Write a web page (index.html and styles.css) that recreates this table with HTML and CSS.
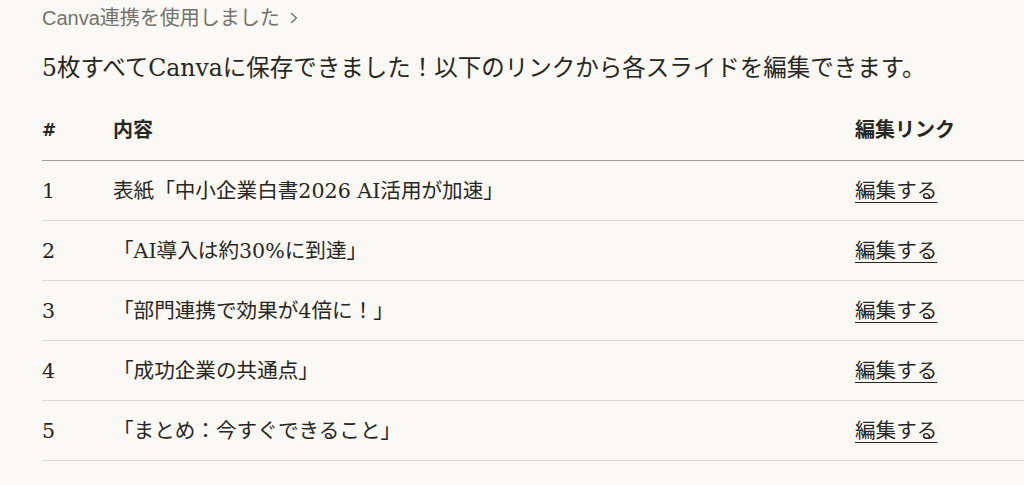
FILE: index.html
```html
<!DOCTYPE html>
<html lang="ja">
<head>
<meta charset="utf-8">
<link rel="stylesheet" href="styles.css">
</head>
<body>
<div class="page">
  <div class="tool-line">Canva連携を使用しました<span class="chev"><svg width="12" height="14" viewBox="0 0 12 14"><path d="M3.5 2.5 L8.5 7 L3.5 11.5" fill="none" stroke="currentColor" stroke-width="1.4" stroke-linecap="round" stroke-linejoin="round"/></svg></span></div>
  <p class="lead">5枚すべてCanvaに保存できました！以下のリンクから各スライドを編集できます。</p>
  <table class="slides">
    <thead>
      <tr><th class="c-num">#</th><th class="c-body">内容</th><th class="c-link">編集リンク</th></tr>
    </thead>
    <tbody>
      <tr><td>1</td><td>表紙「中小企業白書2026 AI活用が加速」</td><td><a href="#">編集する</a></td></tr>
      <tr><td>2</td><td>「AI導入は約30%に到達」</td><td><a href="#">編集する</a></td></tr>
      <tr><td>3</td><td>「部門連携で効果が4倍に！」</td><td><a href="#">編集する</a></td></tr>
      <tr><td>4</td><td>「成功企業の共通点」</td><td><a href="#">編集する</a></td></tr>
      <tr><td>5</td><td>「まとめ：今すぐできること」</td><td><a href="#">編集する</a></td></tr>
    </tbody>
  </table>
</div>
</body>
</html>
```
FILE: styles.css
```css
html, body {
  margin: 0;
  padding: 0;
  background: #faf9f5;
  overflow: hidden;
}
.page {
  padding-left: 42px;
  color: #29261f;
  font-family: "DejaVu Serif", "Noto Sans CJK JP", serif;
}
.tool-line {
  font-family: "Liberation Sans", "Noto Sans CJK JP", sans-serif;
  font-size: 20px;
  line-height: 36px;
  color: #74726c;
  display: flex;
  align-items: center;
}
.chev {
  display: inline-flex;
  margin-left: 8px;
  color: #74726c;
}
.lead {
  margin: 14px 0 0;
  font-size: 23.5px;
  line-height: 36px;
}
.slides {
  margin-top: 14px;
  border-collapse: separate;
  border-spacing: 0;
  width: 1000px;
  font-size: 20.6px;
  line-height: 28px;
}
.slides th, .slides td {
  padding: 0;
  text-align: left;
  vertical-align: middle;
}
.slides th {
  height: 60px;
  font-weight: 700;
  font-size: 20px;
  border-bottom: 1px solid #a09e98;
}
.slides th.c-num {
  font-family: "DejaVu Sans", sans-serif;
  font-size: 17px;
}
.slides td {
  height: 59px;
  border-bottom: 1px solid #dad8d2;
}
.c-num { width: 71px; }
.c-body { width: 742px; }
.slides a {
  color: #29261f;
  text-decoration: underline;
  text-underline-offset: 4px;
  text-decoration-thickness: 1px;
}
```
